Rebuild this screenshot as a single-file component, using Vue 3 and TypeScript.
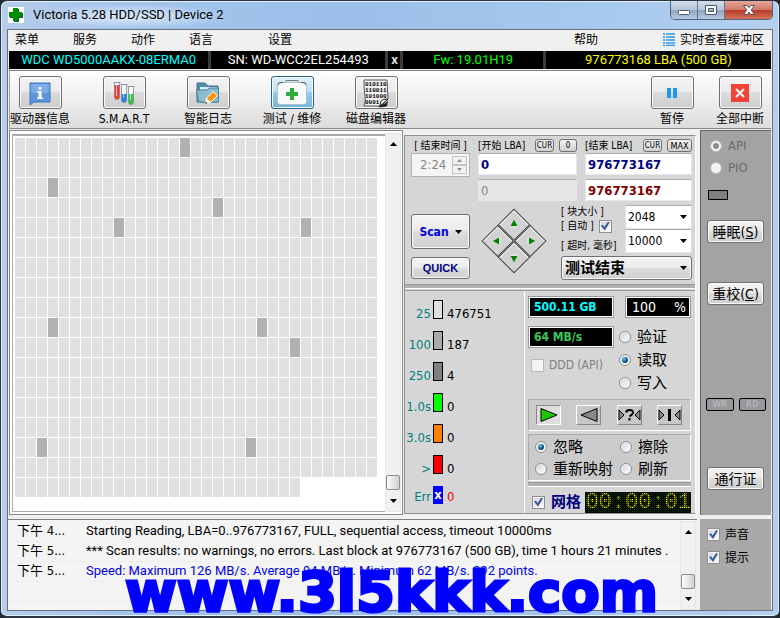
<script setup lang="ts">
import { ref } from 'vue'

interface Tool { id: string; label: string; active?: boolean }
interface Counter { label: string; value: string; color: string }
interface LogRow { time: string; text: string; info?: boolean }

const menus = ['菜单', '服务', '动作', '语言', '设置']

const tools: Tool[] = [
  { id: 'info', label: '驱动器信息' },
  { id: 'smart', label: 'S.M.A.R.T' },
  { id: 'logs', label: '智能日志' },
  { id: 'test', label: '测试 / 维修', active: true },
  { id: 'hex', label: '磁盘编辑器' },
]

const blockCount = 587
const slowBlocks = new Set([15, 69, 117, 141, 158, 300, 319, 355, 497, 516])

const counters: Counter[] = [
  { label: '25', value: '476751', color: '#e0e0e0' },
  { label: '100', value: '187', color: '#a9a9ae' },
  { label: '250', value: '4', color: '#808080' },
  { label: '1.0s', value: '0', color: '#00ff00' },
  { label: '3.0s', value: '0', color: '#ff8000' },
  { label: '>', value: '0', color: '#ff0000' },
]

const log: LogRow[] = [
  { time: '下午 4...', text: 'Starting Reading, LBA=0..976773167, FULL, sequential access, timeout 10000ms' },
  { time: '下午 5...', text: '*** Scan results: no warnings, no errors. Last block at 976773167 (500 GB), time 1 hours 21 minutes .' },
  { time: '下午 5...', text: 'Speed: Maximum 126 MB/s. Average 94 MB/s. Minimum 62 MB/s. 392 points.', info: true },
]

const hexRows = ['010110', '110011', '101000', '0001']
const directions = ['up', 'right', 'left', 'down']

const startLba = ref('0')
const endLba = ref('976773167')
const api = ref('API')
const mode = ref('读取')
const action = ref('忽略')
const autoSize = ref(true)
const ddd = ref(false)
const showGrid = ref(true)
const sound = ref(true)
const hints = ref(true)
</script>

<template>
  <div class="window">
    <header class="title">
      <svg class="logo" width="16" height="16" viewBox="0 0 16 16">
        <rect width="16" height="16" fill="#fff" />
        <path d="M6 2h5v4h4v5h-4v4H6v-4H2V6h4z" fill="#063" />
        <path d="M5 1h5v4h4v5h-4v4H5v-4H1V5h4z" fill="#008a00" />
      </svg>
      <h1>Victoria 5.28 HDD/SSD | Device 2</h1>
      <div class="caption">
        <button aria-label="Minimize">
          <svg width="14" height="12" viewBox="0 0 14 12"><rect x="1.500" y="6.500" width="11" height="4" rx="1" fill="#fff" stroke="#4e5a6b" /></svg>
        </button>
        <button aria-label="Maximize">
          <svg width="14" height="12" viewBox="0 0 14 12"><path d="M1.500 1.500h11v9h-11z M4.500 4.500h5v3h-5z" fill="#fff" fill-rule="evenodd" stroke="#4e5a6b" /></svg>
        </button>
        <button class="close" aria-label="Close">
          <svg width="14" height="12" viewBox="0 0 14 12"><path d="M1.500 1.500h3.500l2 2.200 2-2.200h3.500L9.200 6l3.300 4.500H9L7 8.200l-2 2.300H1.500L4.800 6z" fill="#fff" stroke="#5c4a55" /></svg>
        </button>
      </div>
    </header>

    <div class="client">
      <nav class="menu">
        <a v-for="m in menus" :key="m" href="#">{{ m }}</a>
        <a class="help" href="#">帮助</a>
        <a class="buffer" href="#">
          <svg width="12" height="13" viewBox="0 0 12 13"><path d="M0 1h2M3 1h9M0 4h2M3 4h9M0 7h2M3 7h9M0 10h2M3 10h9M0 12.500h2M3 12.500h9" stroke="#2a96ea" stroke-width="1.500" /></svg>
          实时查看缓冲区
        </a>
      </nav>

      <div class="device">
        <span class="model">WDC WD5000AAKX-08ERMA0</span>
        <span>SN: WD-WCC2EL254493</span>
        <button class="drop">x</button>
        <span class="fw">Fw: 19.01H19</span>
        <span class="lba">976773168 LBA (500 GB)</span>
      </div>

      <div class="toolbar">
        <div v-for="t in tools" :key="t.id" class="tool">
          <button :class="{ active: t.active }" :aria-label="t.label">
            <svg v-if="t.id === 'info'" width="24" height="24" viewBox="0 0 24 24">
              <path d="M2 2h20v19H6l-4 3z" fill="#5e95dc" stroke="#3c74be" />
              <path d="M3 3h18v9H3z" fill="#7cabe8" />
              <path d="M10.500 6h3v2.500h-3z M9 10h4.500v6.500H15V18H9v-1.500h1.500v-5H9z" fill="#fff" />
            </svg>
            <svg v-else-if="t.id === 'smart'" width="24" height="26" viewBox="0 0 24 26">
              <g stroke="#93a0ae" fill="#f4f8fb">
                <path d="M2.500 2.500h5V17a2.500 2.500 0 0 1-5 0z" />
                <path d="M9.500 4.500h5V20a2.500 2.500 0 0 1-5 0z" />
                <path d="M16.500 6.500h5V22a2.500 2.500 0 0 1-5 0z" />
              </g>
              <path d="M2.500 5h5v12a2.500 2.500 0 0 1-5 0z" fill="#e14436" />
              <path d="M9.500 14h5v6a2.500 2.500 0 0 1-5 0z" fill="#2584de" />
              <path d="M16.500 14h5v8a2.500 2.500 0 0 1-5 0z" fill="#3fbd4b" />
              <path d="M1.500 2.500h7M8.500 4.500h7M15.500 6.500h7" stroke="#8795a5" />
              <path d="M4.500 4v12M11.500 6v12M18.500 8v12" stroke="#fff" opacity=".6" />
            </svg>
            <svg v-else-if="t.id === 'logs'" width="26" height="24" viewBox="0 0 26 24">
              <path d="M2 21V2h8l3 3h10v16z" fill="#568ea5" stroke="#39748d" />
              <path d="M5 6h17v13H5z" fill="#d9edf3" />
              <path d="M3.500 21 1.500 9H12l2-2h9.500V21z" fill="#8cbdd0" stroke="#477f96" />
              <path d="m10 23 1.500-6L18 10.500l4.500 4L16 21z" fill="#ff9414" stroke="#fff" />
              <path d="m10 23 1.500-6 4.500 4z" fill="#fff0d2" />
              <path d="m10 23 .7-2.500 1.800 1.700z" fill="#444" />
            </svg>
            <svg v-else-if="t.id === 'test'" width="32" height="27" viewBox="0 0 32 27">
              <path d="M9 4l1-2.500h12L23 4" fill="none" stroke="#777" />
              <rect x="1.500" y="3.500" width="29" height="22" rx="3" fill="#f8fafb" stroke="#b3bfc5" />
              <path d="M2 6q0-2.500 3-2.500h2M25 3.500h2q3 0 3 2.500" fill="none" stroke="#555" />
              <path d="M14 9h4v4h4v4h-4v4h-4v-4h-4v-4h4z" fill="#31ae3a" />
            </svg>
            <svg v-else width="28" height="30" viewBox="0 0 28 30">
              <path d="M2 2h23l1 19-7 7H2q2-5 1-10t-1-16z" fill="#f2f2f2" stroke="#555" />
              <text v-for="(row, i) in hexRows" :key="i" x="3" :y="8 + i * 6" class="bits">{{ row }}</text>
              <path d="m18 28 1-5q1-2 7-2z" fill="#fff" stroke="#222" />
              <path d="m16 29 3-2q5-1 7-5l-1 6q-4 2-9 1z" fill="#222" />
            </svg>
          </button>
          <span>{{ t.label }}</span>
        </div>
        <div class="tool narrow first">
          <button aria-label="暂停">
            <svg width="12" height="10" viewBox="0 0 12 10"><path d="M1 0h4v10H1zM7 0h4v10H7z" fill="#2196f3" /></svg>
          </button>
          <span>暂停</span>
        </div>
        <div class="tool narrow">
          <button aria-label="全部中断">
            <svg width="18" height="18" viewBox="0 0 18 18"><path d="M0 0h18v18H0z" fill="#f44336" /><path d="m5 5 8 8m0-8-8 8" stroke="#fff" stroke-width="2" /></svg>
          </button>
          <span>全部中断</span>
        </div>
      </div>

      <main class="main">
        <section class="map">
          <div class="blocks">
            <i v-for="n in blockCount" :key="n" :class="{ slow: slowBlocks.has(n - 1) }"></i>
          </div>
          <div class="scroll">
            <svg width="7" height="4" viewBox="0 0 7 4"><path d="M0 4 3.500 0 7 4z" /></svg>
            <i class="thumb"></i>
            <svg width="7" height="4" viewBox="0 0 7 4"><path d="m0 0 3.500 4L7 0z" /></svg>
          </div>
        </section>

        <section class="control">
          <div class="range">
            <div class="field">
              <label class="cap" for="time">[ 结束时间 ]</label>
              <div class="time">
                <input id="time" value="2:24" disabled />
                <div class="spin">
                  <button disabled aria-label="+"><svg width="5" height="3" viewBox="0 0 5 3"><path d="M0 3 2.500 0 5 3z" /></svg></button>
                  <button disabled aria-label="-"><svg width="5" height="3" viewBox="0 0 5 3"><path d="m0 0 2.500 3L5 0z" /></svg></button>
                </div>
              </div>
            </div>
            <div class="field">
              <div class="cap"><label for="start">[开始 LBA]</label><button>CUR</button><button>0</button></div>
              <input id="start" v-model="startLba" />
              <input class="off" value="0" disabled aria-label="LBA" />
            </div>
            <div class="field">
              <div class="cap"><label for="end">[结束 LBA]</label><button>CUR</button><button class="max">MAX</button></div>
              <input id="end" v-model="endLba" />
              <input class="current" value="976773167" readonly aria-label="LBA" />
            </div>
          </div>

          <div class="launch">
            <div class="go">
              <button class="scan">Scan <svg width="7" height="4" viewBox="0 0 7 4"><path d="m0 0 3.500 4L7 0z" /></svg></button>
              <button class="quick">QUICK</button>
            </div>
            <div class="pad">
              <div class="diamond">
                <button v-for="d in directions" :key="d" :class="d" :aria-label="d">
                  <svg width="9" height="9" viewBox="0 0 9 9"><path d="M1 7.500 4.500 1 8 7.500z" fill="#008000" /><path d="M1 8h7" stroke="#fff" /></svg>
                </button>
              </div>
            </div>
            <div class="options">
              <div class="sizes">
                <div class="labels">
                  <label for="size">[ 块大小 ]</label>
                  <label>[ 自动 ]<input v-model="autoSize" type="checkbox" /></label>
                  <label class="timeout" for="timeout">[ 超时, 毫秒]</label>
                </div>
                <div class="combos">
                  <div class="combo">
                    <select id="size"><option>2048</option></select>
                    <svg width="7" height="4" viewBox="0 0 7 4"><path d="m0 0 3.500 4L7 0z" /></svg>
                  </div>
                  <div class="combo">
                    <select id="timeout"><option>10000</option></select>
                    <svg width="7" height="4" viewBox="0 0 7 4"><path d="m0 0 3.500 4L7 0z" /></svg>
                  </div>
                </div>
              </div>
              <div class="combo finish">
                <select aria-label="测试结束"><option>测试结束</option></select>
                <svg width="7" height="4" viewBox="0 0 7 4"><path d="m0 0 3.500 4L7 0z" /></svg>
              </div>
            </div>
          </div>

          <div class="rule"></div>

          <div class="status">
            <div class="counters">
              <div v-for="c in counters" :key="c.label" class="counter">
                <span class="key">{{ c.label }}</span>
                <i :style="{ background: c.color }"></i>
                <span>{{ c.value }}</span>
              </div>
              <div class="counter err">
                <span class="key">Err</span><i>x</i><span>0</span>
              </div>
            </div>

            <div class="readout">
              <div class="meters">
                <div class="left">
                  <output class="lcd cyan">500.11 GB</output>
                  <output class="lcd green">64 MB/s</output>
                  <label class="choice ddd"><input v-model="ddd" type="checkbox" disabled />DDD (API)</label>
                </div>
                <div class="right">
                  <output class="lcd percent"><span>100</span><span>%</span></output>
                  <div class="modes">
                    <label v-for="m in ['验证', '读取', '写入']" :key="m" class="choice">
                      <input v-model="mode" type="radio" name="mode" :value="m" />{{ m }}
                    </label>
                  </div>
                </div>
              </div>

              <div class="inset transport">
                <button class="on" aria-label="Forward"><svg width="18" height="14" viewBox="0 0 18 14"><path d="M1 .5v13L17 7z" fill="#1ec800" stroke="#000" /></svg></button>
                <button aria-label="Backward"><svg width="18" height="14" viewBox="0 0 18 14"><path d="M17 .5v13L1 7z" fill="#888" stroke="#000" /></svg></button>
                <button aria-label="Random"><svg width="23" height="14" viewBox="0 0 23 14"><path d="M1 2v10l5-5zM22 2v10l-5-5z" fill="#888" stroke="#000" /><path d="M8 4.500Q8.500 2 11.500 2q4 0 3.500 3-.5 1.500-3.500 3.500M11.500 10v2.500" fill="none" stroke="#000" stroke-width="2" /></svg></button>
                <button aria-label="Butterfly"><svg width="23" height="14" viewBox="0 0 23 14"><path d="M1 2v10l5-5zM22 2v10l-5-5z" fill="#888" stroke="#000" /><path d="M11.500 1v12" stroke="#000" stroke-width="3" /></svg></button>
              </div>

              <div class="inset actions">
                <label v-for="a in ['忽略', '擦除', '重新映射', '刷新']" :key="a" class="choice">
                  <input v-model="action" type="radio" name="action" :value="a" />{{ a }}
                </label>
              </div>

              <div class="rule"></div>

              <div class="clockline">
                <label class="choice"><input v-model="showGrid" type="checkbox" />网格</label>
                <output class="clock">00:00:01</output>
              </div>
            </div>
          </div>
        </section>

        <aside class="side">
          <label v-for="a in ['API', 'PIO']" :key="a" class="choice gray">
            <input v-model="api" type="radio" name="api" :value="a" disabled />{{ a }}
          </label>
          <i class="led"></i>
          <button class="sleep"><span>睡眠(<u>S</u>)</span></button>
          <button class="recal"><span>重校(<u>C</u>)</span></button>
          <div class="lights"><i>WR</i><i>RD</i></div>
          <button class="pass">通行证</button>
        </aside>
      </main>

      <footer class="bottom">
        <div class="log">
          <table>
            <tbody>
              <tr v-for="(r, i) in log" :key="i" :class="{ info: r.info }">
                <td>{{ r.time }}</td><td>{{ r.text }}</td>
              </tr>
              <tr><td></td><td></td></tr>
            </tbody>
          </table>
          <div class="scroll">
            <svg width="7" height="4" viewBox="0 0 7 4"><path d="M0 4 3.500 0 7 4z" /></svg>
            <i class="thumb"></i>
            <svg width="7" height="4" viewBox="0 0 7 4"><path d="m0 0 3.500 4L7 0z" /></svg>
          </div>
        </div>
        <div class="toggles">
          <label class="choice"><input v-model="sound" type="checkbox" />声音</label>
          <label class="choice"><input v-model="hints" type="checkbox" />提示</label>
        </div>
      </footer>
    </div>
    <div class="watermark">www.3l5kkk.com</div>
  </div>
</template>

<style>
body { background: #23272e; }
</style>

<style scoped>
* { box-sizing: border-box; }
.window {
  position: relative;
  display: flex;
  flex-direction: column;
  min-height: 100vh;
  border: 1px solid #2b3542;
  border-bottom-width: 2px;
  border-radius: 7px;
  padding: 0 6px 5px;
  background: linear-gradient(90deg, #b6cdea, #a3c4ec 15%, #9cbfe9 45%, #a6c8ef 75%, #b5d0ee);
  box-shadow: inset 0 0 0 1px #e3eefa;
  font: 12px/16px "DejaVu Sans Condensed", "DejaVu Sans", "Noto Sans CJK SC", sans-serif;
  color: #000;
  overflow: hidden;
}
button, input, select { font: inherit; color: inherit; margin: 0; padding: 0; }
button { display: flex; align-items: center; justify-content: center; white-space: nowrap; }
a { color: inherit; text-decoration: none; }
svg { flex: none; display: block; }
i { font-style: normal; }

.title { display: flex; height: 28px; padding-left: 1px; }
.logo { margin-top: 6px; }
h1 {
  margin: 3px 0 0;
  padding: 2px 9px;
  font: 13px/18px Roboto, sans-serif;
  background: radial-gradient(closest-side, #dfeafa, #dfeafa00);
}
.caption { display: flex; align-self: flex-start; margin-left: auto; border: 1px solid #54657b; border-top: 0; border-radius: 0 0 5px 5px; overflow: hidden; }
.caption button { width: 27px; height: 18px; border: 0; border-right: 1px solid #64748a; background: linear-gradient(#d2deeb, #b5c5d8 48%, #8fa5bf 50%, #b4cbe4); }
.caption .close { width: 47px; border: 0; background: linear-gradient(#e5a79c, #d07a6c 48%, #b53c28 50%, #d5705a); }

.client {
  flex: 1;
  display: flex;
  flex-direction: column;
  border: 1px solid #67707b;
  background: #f0f0f0;
}
.menu { display: flex; align-items: center; gap: 34px; height: 21px; padding: 0 8px 2px 7px; }
.menu a { flex: none; }
.menu a:nth-child(5) { margin-left: 21px; }
.menu .help { margin-left: auto; }
.menu .buffer { display: flex; align-items: center; gap: 5px; margin-left: 31px; }

.device {
  display: grid;
  grid-template-columns: 200fr 175fr 12px 140fr 226fr;
  gap: 3px;
  height: 18px;
  margin: 0 1px;
  background: #3c3c3c;
  color: #fff;
  text-align: center;
  font: 13px/18px Roboto, sans-serif;
}
.device > * { background: #000; border: 0; white-space: nowrap; }
.drop { color: #ddd; font-weight: 700; }
.model { color: #0ff; }
.fw { color: #0f0; }
.lba { color: #ff0; }

.toolbar {
  display: flex;
  gap: 24px;
  height: 59px;
  margin: 1px 1px 0;
  padding: 5px 7px 0 0;
  border-top: 1px solid #808080;
  border-left: 1px solid #a0a0a0;
  border-bottom: 1px solid #888;
  background: linear-gradient(#fff, #ededed 55%, #dcdcdc);
}
.tool { display: flex; flex-direction: column; align-items: center; gap: 2px; width: 60px; }
.tool span { white-space: nowrap; line-height: 16px; }
.tool button {
  width: 43px;
  height: 33px;
  border: 1px solid #707070;
  border-radius: 3px;
  background: linear-gradient(#f3f3f3, #ebebeb 48%, #dbdbdb 50%, #cdcdcd);
  box-shadow: inset 0 0 0 1px #fafafa;
}
.tool button.active { border-color: #2c628b; background: linear-gradient(#dff1fb, #b9e0f6 48%, #93cbec 50%, #6fb6df); }
.tool.narrow { width: 48px; margin-left: -4px; }
.tool.first { margin-left: auto; }
.bits { font: bold 6px "Liberation Mono", monospace; }

.main { flex: 1; display: flex; margin: 1px 1px 0 0; }
.map {
  flex: 1;
  display: flex;
  margin: 0 1px;
  padding: 2px 1px 2px 2px;
  border: 1px solid #888;
  background: #fff;
  min-width: 0;
}
.blocks {
  flex: 1;
  display: grid;
  grid-template-columns: repeat(auto-fill, 10px);
  grid-auto-rows: 19px;
  align-content: start;
  gap: 1px;
  margin-top: 1px;
  padding: 2px 6px 0 2px;
  border: 2px solid #a9a9ae;
  border-width: 2px 0 1px 1px;
}
.blocks i { background: #e0e0e0; }
.blocks .slow { background: #b1b1b1; }
.scroll { flex: none; display: flex; flex-direction: column; align-items: center; width: 16px; padding: 8px 0; background: #f0f0f0; border: 1px solid #e6e6e6; }
.scroll .thumb { width: 14px; height: 15px; margin: auto 0 9px; border: 1px solid #8e8e8e; border-radius: 2px; background: linear-gradient(90deg, #fafafa, #d2d2d6); }

.control {
  flex: none;
  width: 292px;
  display: flex;
  flex-direction: column;
  margin: 5px 4px 1px 0;
  padding: 2px 0 0;
  border: 1px solid #8f8f8f;
  border-right-color: #fff;
  background: #d6d6d6;
}
.range { display: grid; grid-template-columns: 59px 99px 1fr; gap: 8px; padding: 0 3px 0 6px; }
.field { min-width: 0; }
.cap { display: flex; align-items: center; height: 15px; font-size: 10px; line-height: 14px; white-space: nowrap; }
.cap label { margin-right: auto; }
.cap button { width: 18px; height: 13px; margin-left: 5px; border: 1px solid #707070; border-radius: 3px; background: linear-gradient(#f4f4f4, #d0d0d0); font-size: 8px; line-height: 10px; }
.cap button:nth-child(2) { width: 19px; }
.cap .max { width: 25px; font-size: 9px; }
label.cap { justify-content: center; }
.field > input {
  display: block;
  width: 100%;
  height: 22px;
  margin-bottom: 4px;
  padding: 0 2px;
  border: 1px solid #e3e9ef;
  border-top-color: #abadb3;
  background: #fff;
  color: #000080;
  font-size: 13px;
  font-weight: 700;
}
.field > .off { background: #e6e6e6; color: #858585; font-weight: 400; }
.field > .current { color: #800000; }
.time { display: flex; height: 24px; border: 1px solid #b2b2b2; background: #f5f5f5; padding: 2px; }
.time input { flex: 1; width: 0; border: 0; background: none; padding-left: 6px; color: #858585; font-size: 13px; }
.spin { width: 15px; display: flex; flex-direction: column; }
.spin button { flex: 1; border: 1px solid #c4c4c4; background: #f2f2f2; fill: #888; }

.launch { display: grid; grid-template-columns: 59px 1fr 131px; gap: 5px; padding: 0 3px 0 6px; height: 79px; }
.go { display: flex; flex-direction: column; gap: 8px; padding-top: 9px; color: #0000e0; font-weight: 700; }
.go button, .finish, .side button {
  border: 1px solid #707070;
  border-radius: 3px;
  background: linear-gradient(#f3f3f3, #ebebeb 48%, #dddddd 50%, #cfcfcf);
  box-shadow: inset 0 0 0 1px #fafafa;
}
.scan { height: 35px; gap: 6px; }
.scan svg { fill: #000; }
.quick { height: 22px; font: bold 11px "Liberation Sans", sans-serif; color: #000080; }
.pad { display: flex; justify-content: center; align-items: center; height: 72px; padding-right: 4px; }
.diamond { display: grid; grid-template-columns: 23px 23px; grid-auto-rows: 23px; transform: rotate(45deg); }
.diamond button { border: 1px solid #444; background: #d2d2d2; box-shadow: inset 1px 1px #fff; }
.up { padding: 0 2px 2px 0; }
.up svg { transform: rotate(-45deg); }
.diamond .right { padding: 0 0 2px 2px; }
.diamond .right svg { transform: rotate(45deg); }
.diamond .left { padding: 2px 2px 0 0; }
.diamond .left svg { transform: rotate(-135deg); }
.down { padding: 2px 0 0 2px; }
.down svg { transform: rotate(135deg); }
.options { min-width: 0; }
.sizes { display: flex; justify-content: space-between; }
.labels { display: flex; flex-direction: column; font-size: 10px; line-height: 14px; white-space: nowrap; }
.labels label { display: flex; align-items: center; gap: 5px; height: 14px; }
.labels .timeout { margin-top: 6px; }
.combos { width: 67px; }
.combo { display: grid; align-items: center; height: 24px; border: 1px solid #dfe4ea; border-top-color: #abadb3; background: #fff; }
.combo select { grid-area: 1 / 1; appearance: none; width: 100%; height: 100%; padding: 0 2px; border: 0; background: none; font-size: 12px; }
.combo svg { grid-area: 1 / 1; justify-self: end; margin-right: 4px; pointer-events: none; }
.options .finish { margin-top: 3px; border: 1px solid #707070; background: linear-gradient(#f3f3f3, #ebebeb 48%, #dddddd 50%, #cfcfcf); }
.finish select { font-size: 15px; font-weight: 700; padding: 0 3px; }

.rule { flex: none; height: 5px; border-top: 1px solid #999; border-bottom: 1px solid #fff; background: #b0b0b0; }
.status { flex: 1; display: flex; border-top: 1px solid #999; margin-top: 1px; }
.counters { flex: 1; padding-top: 9px; border-right: 1px solid #fff; font-size: 13px; }
.counter { display: flex; align-items: flex-end; gap: 4px; height: 31px; line-height: 14px; }
.counter .key { width: 26px; margin-right: -2px; color: #008080; text-align: right; white-space: nowrap; flex: none; }
.counter > i { width: 10px; height: 19px; margin-bottom: 12px; border: 1px solid #000; }
.counter > span { padding-bottom: 10px; }
.err { height: 20px; align-items: flex-start; }
.err > i { height: 18px; margin: 0; border: 0; background: #00f; color: #fff; font-weight: 700; text-align: center; line-height: 17px; }
.err > span { padding: 4px 0 0; }
.err > span:last-child { color: #f00; }

.readout { flex: none; width: 170px; display: flex; flex-direction: column; padding: 5px 4px 0 3px; }
.meters { display: flex; justify-content: space-between; height: 103px; }
.meters .left { width: 86px; display: flex; flex-direction: column; gap: 8px; }
.meters .right { width: 66px; }
.lcd { display: block; height: 22px; padding: 0 5px; border: 1px solid #999; outline: 1px solid #fff; outline-offset: -2px; background: #000; font-weight: 700; font-size: 12px; line-height: 20px; }
.cyan { color: #0ff; }
.green { color: #3cc85c; }
.percent { display: flex; justify-content: space-between; padding: 0 4px 0 6px; color: #fff; font-weight: 400; font-size: 14px; }
.choice { display: flex; align-items: center; gap: 5px; white-space: nowrap; }
.choice input, .labels input {
  flex: none;
  appearance: none;
  display: grid;
  place-items: center;
  width: 13px;
  height: 13px;
  border: 1px solid #8e8f8f;
  background: linear-gradient(135deg, #d0d4d8, #fff);
  box-shadow: inset 0 0 0 1px #f4f4f4;
}
.choice input[type="radio"] { width: 12px; height: 12px; border-radius: 50%; }
.choice input[type="radio"]:checked::after { content: ""; width: 6px; height: 6px; border-radius: 50%; background: radial-gradient(circle at 35% 30%, #5fd0f0, #0d4a78 60%, #083050); }
input[type="checkbox"]:checked::after { content: ""; width: 9px; height: 9px; background: #3b55a0; clip-path: polygon(0 45%, 22% 35%, 40% 62%, 80% 0, 100% 8%, 45% 100%); }
.choice input:disabled { border-color: #b8b8b8; background: #f4f4f4; }
.choice input[type="radio"]:disabled:checked::after { background: #8b8b8b; }
.ddd { padding-left: 3px; margin-top: 1px; color: #808080; }
.modes { padding-top: 7px; }
.modes .choice { height: 23px; margin-left: -6px; gap: 6px; font-size: 15px; }
.inset { border: 1px solid #aaa; border-right-color: #fff; border-bottom-color: #fff; background: #cbcbcb; }
.transport { display: flex; justify-content: space-between; height: 32px; padding: 5px 8px 6px 7px; }
.transport button { width: 25px; height: 20px; border: 1px solid; border-color: #fff #888 #888 #fff; background: #c6c6c6; }
.transport .on { border-color: #888 #fff #fff #888; background: #dedede; }
.actions { display: grid; grid-template-columns: 85px 1fr; grid-auto-rows: 22px; height: 47px; margin: 3px 0 1px; padding: 1px 0 0 6px; font-size: 15px; }
.actions .choice { gap: 6px; min-width: 0; }
.clockline { display: flex; align-items: center; justify-content: space-between; padding: 4px 0 0 4px; height: 26px; }
.clockline .choice { gap: 6px; font-size: 15px; font-weight: 700; color: #000080; }
.clock {
  position: relative;
  height: 21px;
  background: #0c260c;
  color: #ffff20;
  font: 22px/22px "Liberation Mono", monospace;
}
.clock::after {
  content: "";
  position: absolute;
  inset: 0;
  background:
    repeating-linear-gradient(90deg, #000 0 1px, #0000 1px 2px),
    repeating-linear-gradient(#000 0 1px, #0000 1px 2px);
  opacity: .7;
}

.side { flex: none; width: 71px; display: flex; flex-direction: column; padding: 4px 7px 0 6px; border-left: 1px solid #666; border-top: 1px solid #666; background: #a3a3a3; }
.side .choice { height: 22px; padding-left: 3px; gap: 6px; }
.gray { color: #6b6b6b; font-size: 13px; }
.led { width: 20px; height: 10px; margin: 11px 0 0 1px; border: 1px solid #000; background: #808080; }
.side button { height: 23px; font-size: 14px; }
.sleep { margin-top: 20px; }
.recal { margin-top: 39px; }
.lights { display: flex; gap: 5px; margin: 93px -2px 0 -1px; }
.lights i { flex: 1; height: 13px; border: 1px solid #000; border-radius: 2px; background: #96969c; color: #b8b0b0; font-size: 9px; font-weight: 700; line-height: 11px; text-align: center; }
.pass { margin-top: 56px; }

.bottom { display: flex; gap: 3px; height: 91px; margin: 4px 1px 0 0; }
.log { flex: 1; display: flex; min-width: 0; border-top: 1px solid #808080; background: #f4f4f4; padding: 1px 1px 0 0; }
.log table { flex: 1; min-width: 0; width: 100%; table-layout: fixed; border-collapse: collapse; align-self: flex-start; }
.log tr { height: 20px; border-bottom: 1px solid #eee; }
.log td { padding: 0; white-space: nowrap; line-height: 18px; font-family: Roboto, "Noto Sans CJK SC", sans-serif; font-size: 13px; }
.log td:first-child { width: 78px; padding-left: 9px; font-family: "DejaVu Sans Condensed", "Noto Sans CJK SC", sans-serif; line-height: 16px; }
.log .info td:last-child { color: #0000e8; }
.log .scroll .thumb { margin-bottom: 8px; }
.toggles { flex: none; width: 71px; padding: 4px 0 0 7px; background: #a9a9a9; }
.toggles .choice { height: 23px; }

.watermark {
  position: absolute;
  left: 124px;
  bottom: -4px;
  color: #00f;
  font: 700 56px/56px "DejaVu Sans", sans-serif;
  -webkit-text-stroke: 3px #00f;
  pointer-events: none;
}
</style>
